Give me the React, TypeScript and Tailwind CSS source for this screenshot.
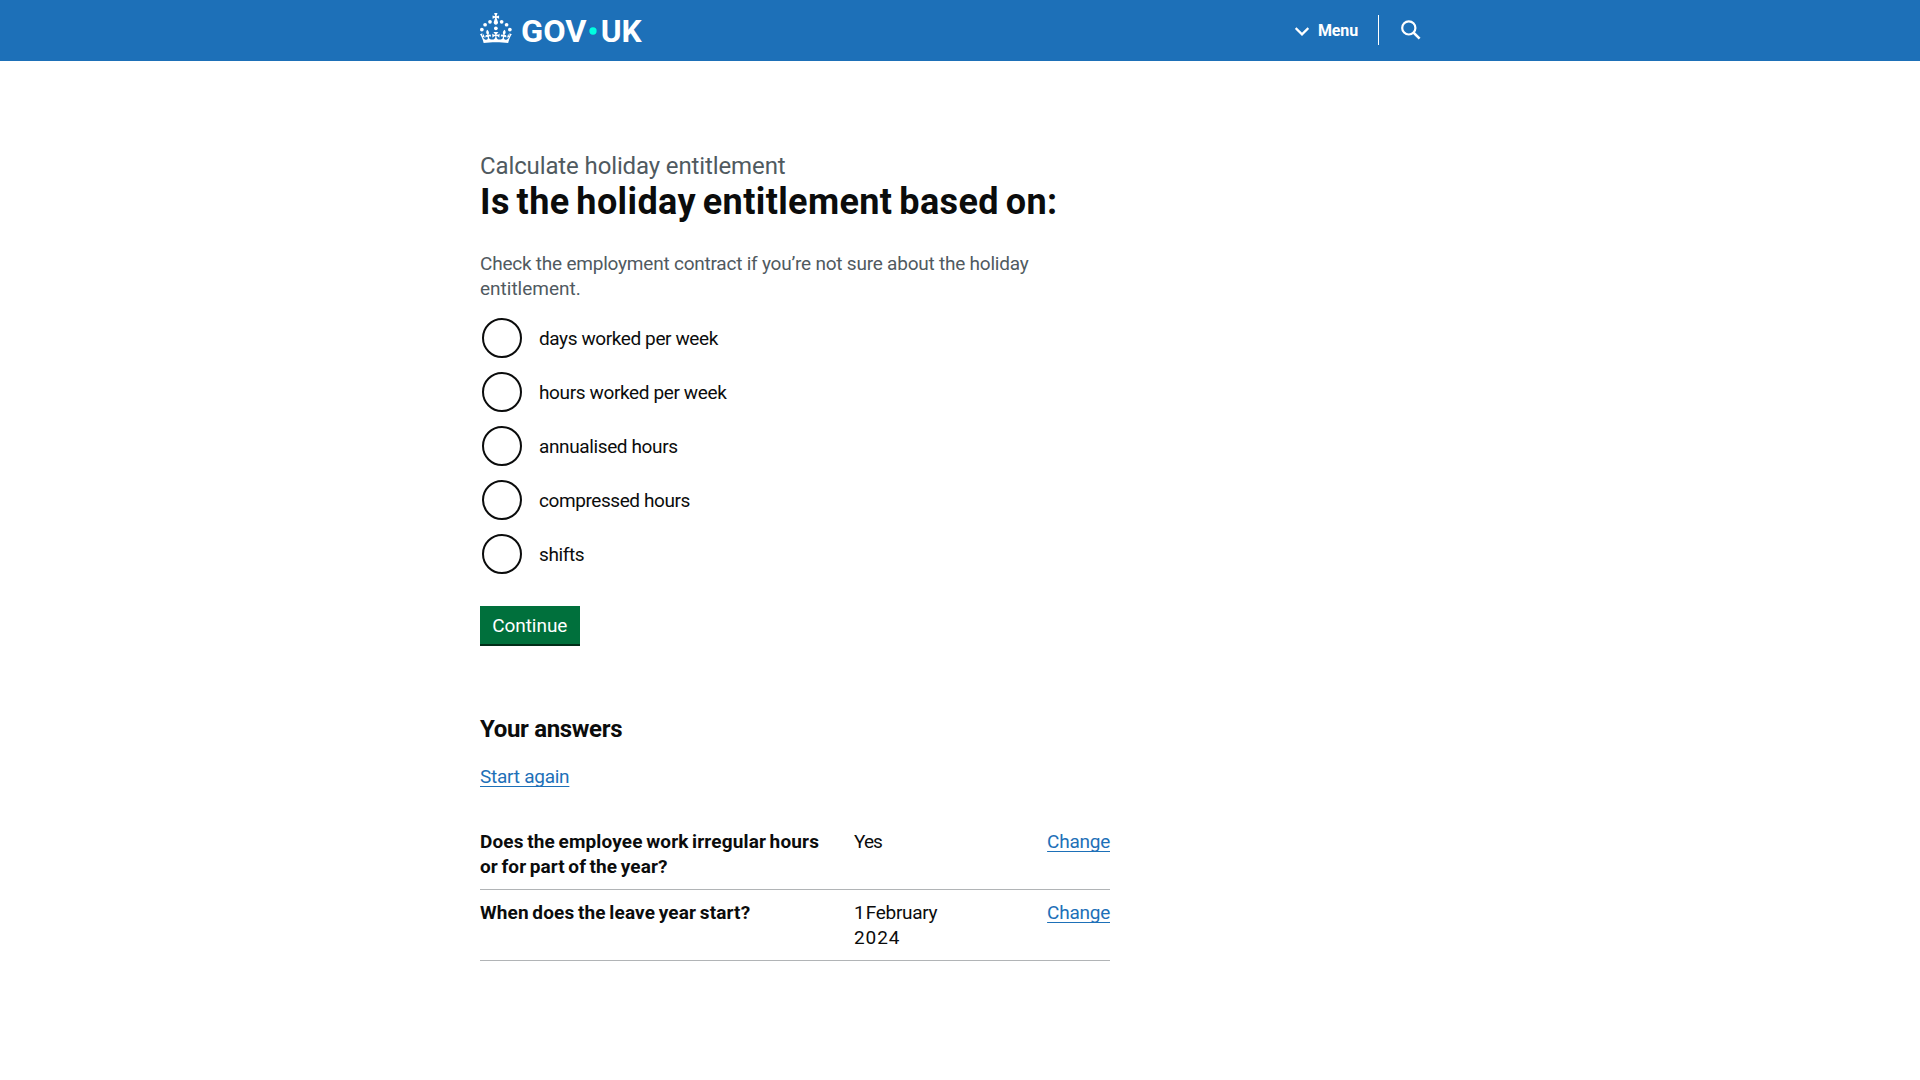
import React from "react";

const options = [
  { text: "days worked per week", tracking: "tracking-[-0.4px]" },
  { text: "hours worked per week", tracking: "tracking-[-0.37px]" },
  { text: "annualised hours", tracking: "tracking-[-0.38px]" },
  { text: "compressed hours", tracking: "tracking-[-0.42px]" },
  { text: "shifts", tracking: "tracking-[-0.37px]" },
];

const answers = [
  {
    question: [
      { text: "Does the employee work irregular hours", tracking: "tracking-[0.14px]" },
      { text: "or for part of the year?", tracking: "tracking-[0.1px]" },
    ],
    value: [{ text: "Yes", tracking: "tracking-[-0.9px]" }],
  },
  {
    question: [{ text: "When does the leave year start?", tracking: "tracking-[0.15px]" }],
    value: [
      { text: "1 February", tracking: "tracking-[-0.3px] [word-spacing:-3px]" },
      { text: "2024", tracking: "tracking-[0.9px]" },
    ],
  },
];

const linkStyle =
  "text-[#1d70b8] underline decoration-1 underline-offset-[3px] [text-decoration-skip-ink:none] tracking-[-0.25px]";

function Logo() {
  return (
    <svg className="block h-[30px] w-[162px] overflow-visible" viewBox="0 0 324 60" fill="#fff" role="img" aria-label="GOV.UK">
      <circle cx="20" cy="17.6" r="3.7" />
      <circle cx="10.2" cy="23.5" r="3.7" />
      <circle cx="3.7" cy="33.2" r="3.7" />
      <circle cx="31.7" cy="30.6" r="3.7" />
      <circle cx="43.3" cy="17.6" r="3.7" />
      <circle cx="53.2" cy="23.5" r="3.7" />
      <circle cx="59.7" cy="33.2" r="3.7" />
      <path d="M33.1,9.8c.2-.1.3-.3.5-.5l4.6,2.4v-6.8l-4.6,1.5c-.1-.2-.3-.3-.5-.5l1.9-5.9h-6.7l1.9,5.9c-.2.1-.3.3-.5.5l-4.6-1.5v6.8l4.6-2.4c.1.2.3.3.5.5l-2.6,8c-.9,2.8,1.2,5.7,4.1,5.7h0c3,0,5.1-2.9,4.1-5.7l-2.6-8ZM37,37.9s-3.4,3.8-4.1,6.1c2.2,0,4.2-.5,6.4-2.8l-.7,8.5c-2-2.8-4.4-4.1-5.7-3.8.1,3.1.5,6.7,5.8,7.2,3.7.3,6.7-1.5,7-3.8.4-2.6-2-4.3-3.7-1.6-1.4-4.5,2.4-6.1,4.9-3.2-1.9-4.5-1.8-7.7,2.4-10.9,3,4,2.6,7.3-1.2,11.1,2.4-1.3,6.2,0,4,4.6-1.2-2.8-3.7-2.2-4.2.2-.3,1.7.7,3.7,3,4.2,1.9.3,4.7-.9,7-5.9-1.3,0-2.4.7-3.9,1.7l2.4-8c.6,2.3,1.4,3.7,2.2,4.5.6-1.6.5-2.8,0-5.3l5,1.8c-2.6,3.6-5.2,8.7-7.3,17.5-7.4-1.1-15.7-1.7-24.5-1.7h0c-8.8,0-17.1.6-24.5,1.7-2.1-8.9-4.7-13.9-7.3-17.5l5-1.8c-.5,2.5-.6,3.7,0,5.3.8-.8,1.6-2.3,2.2-4.5l2.4,8c-1.5-1-2.6-1.7-3.9-1.7,2.3,5,5.2,6.2,7,5.9,2.3-.4,3.3-2.4,3-4.2-.5-2.4-3-3.1-4.2-.2-2.2-4.6,1.6-6,4-4.6-3.7-3.7-4.2-7.1-1.2-11.1,4.2,3.2,4.3,6.4,2.4,10.9,2.5-2.8,6.3-1.3,4.9,3.2-1.8-2.7-4.1-1-3.7,1.6.3,2.3,3.3,4.1,7,3.8,5.4-.5,5.7-4.2,5.8-7.2-1.3-.2-3.7,1-5.7,3.8l-.7-8.5c2.2,2.3,4.2,2.7,6.4,2.8-.7-2.3-4.1-6.1-4.1-6.1h10.6,0Z" />
      <circle cx="226" cy="36" r="7.3" fill="#00ffe0" />
      <g fontFamily="Roboto, sans-serif" fontWeight="700" fontSize="61">
        <text x="82" y="57.4" textLength="131" lengthAdjust="spacingAndGlyphs">GOV</text>
        <text x="241.5" y="57.4" textLength="82" lengthAdjust="spacingAndGlyphs">UK</text>
      </g>
    </svg>
  );
}

export default function App() {
  return (
    <div className="min-h-screen bg-white font-[Roboto,sans-serif] text-[19px] leading-[25px] text-[#0b0c0c]">
      <header className="h-[61px] bg-[#1d70b8] text-white">
        <div className="mx-auto flex h-full w-[960px] items-start justify-between">
          <a href="#" className="mt-[13px]">
            <Logo />
          </a>
          <nav className="mr-[19px] flex h-[60px] items-center">
            <button className="flex items-center text-base leading-5 font-bold">
              <svg className="mt-0.5 mr-[9px] block h-[9px] w-[14px]" viewBox="0 0 14 9" fill="none" stroke="#fff" strokeWidth="2.2">
                <path d="M0.7 1.1 7 7.4 13.3 1.1" />
              </svg>
              <span className="mt-0.5 w-[60px] text-left tracking-[-0.15px]">Menu</span>
            </button>
            <span className="h-[30px] w-px bg-white" />
            <button aria-label="Search" className="ml-[22px]">
              <svg className="block h-5 w-5" viewBox="0 0 20 20" fill="none" stroke="#fff" strokeWidth="2.2">
                <circle cx="7.8" cy="7.9" r="6.6" />
                <path d="M12.3 12.4 18.6 18.7" strokeWidth="2.6" />
              </svg>
            </button>
          </nav>
        </div>
      </header>

      <main className="mx-auto w-[960px] pt-[90px]">
        <div className="w-[630px]">
          <p className="text-2xl leading-[30px] tracking-[-0.12px] text-[#505a5f]">Calculate holiday entitlement</p>
          <h1 className="mt-px text-4xl leading-[41px] font-bold tracking-[0.38px] [word-spacing:-2.5px]">
            Is the holiday entitlement based on:
          </h1>

          <div className="mt-7 text-[#505a5f]">
            <span className="block tracking-[-0.22px]">
              Check the employment contract if you’re not sure about the holiday
            </span>
            <span className="block">entitlement.</span>
          </div>

          <div className="mt-[15px] flex flex-col gap-2.5">
            {options.map((o) => (
              <label key={o.text} className="flex h-11 items-center pl-0.5">
                <input
                  type="radio"
                  name="basis"
                  className="mr-[17px] h-10 w-10 shrink-0 appearance-none rounded-full border-2 border-[#0b0c0c]"
                />
                <span className={o.tracking}>{o.text}</span>
              </label>
            ))}
          </div>

          <button className="mt-[30px] block h-[38px] w-[99.5px] bg-[#00703c] text-center tracking-[-0.05px] text-white shadow-[0_2px_0_#002d18]">
            Continue
          </button>

          <h2 className="mt-[70px] text-2xl leading-[30px] font-bold tracking-[-0.33px]">Your answers</h2>
          <p className="mt-5">
            <a href="#" className={linkStyle}>
              Start again
            </a>
          </p>

          <dl className="mt-[30px]">
            {answers.map((a) => (
              <div key={a.question[0].text} className="flex border-b border-[#b1b4b6] py-2.5">
                <dt className="w-[374px] font-bold [word-spacing:-1.3px]">
                  {a.question.map((l) => (
                    <span key={l.text} className={`block ${l.tracking}`}>
                      {l.text}
                    </span>
                  ))}
                </dt>
                <dd className="flex-1">
                  {a.value.map((l) => (
                    <span key={l.text} className={`block ${l.tracking}`}>
                      {l.text}
                    </span>
                  ))}
                </dd>
                <dd className="h-[50px]">
                  <a href="#" className={linkStyle}>
                    Change
                  </a>
                </dd>
              </div>
            ))}
          </dl>
        </div>
      </main>
    </div>
  );
}
